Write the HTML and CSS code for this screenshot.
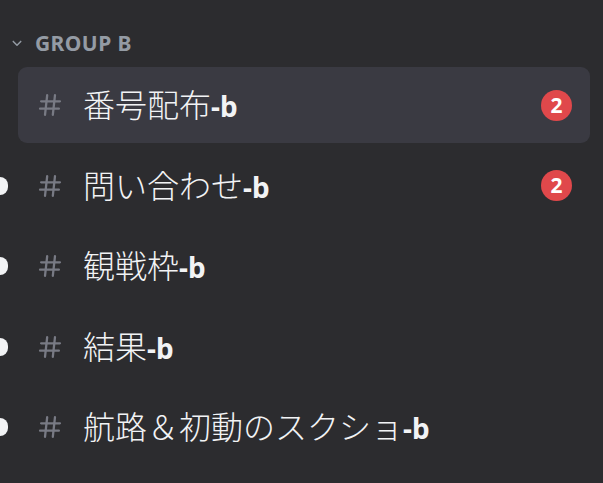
FILE: index.html
```html
<!DOCTYPE html>
<html lang="ja">
<head>
<meta charset="utf-8">
<link rel="stylesheet" href="styles.css">
</head>
<body>
<div class="sidebar">
  <div class="category">
    <svg class="chev" viewBox="0 0 12 8" width="10" height="7"><path d="M1.5 1.5 L6 6 L10.5 1.5" fill="none" stroke="#949ba4" stroke-width="1.8" stroke-linecap="round" stroke-linejoin="round"/></svg>
    <span class="cat-name">GROUP B</span>
  </div>
  <ul class="channels">
    <li class="channel selected">
      <svg class="hash" viewBox="0 0 24 24"><path d="M9.4 3 7.4 21M16.6 3 14.6 21M3.8 8.6h17.4M2.8 15.4h17.4" fill="none" stroke="currentColor" stroke-width="2.1" stroke-linecap="round"/></svg>
      <span class="name">番号配布<b>-b</b></span>
      <span class="badge">2</span>
    </li>
    <li class="channel unread">
      <span class="pill"></span>
      <svg class="hash" viewBox="0 0 24 24"><path d="M9.4 3 7.4 21M16.6 3 14.6 21M3.8 8.6h17.4M2.8 15.4h17.4" fill="none" stroke="currentColor" stroke-width="2.1" stroke-linecap="round"/></svg>
      <span class="name">問い合わせ<b>-b</b></span>
      <span class="badge">2</span>
    </li>
    <li class="channel unread">
      <span class="pill"></span>
      <svg class="hash" viewBox="0 0 24 24"><path d="M9.4 3 7.4 21M16.6 3 14.6 21M3.8 8.6h17.4M2.8 15.4h17.4" fill="none" stroke="currentColor" stroke-width="2.1" stroke-linecap="round"/></svg>
      <span class="name">観戦枠<b>-b</b></span>
    </li>
    <li class="channel unread">
      <span class="pill"></span>
      <svg class="hash" viewBox="0 0 24 24"><path d="M9.4 3 7.4 21M16.6 3 14.6 21M3.8 8.6h17.4M2.8 15.4h17.4" fill="none" stroke="currentColor" stroke-width="2.1" stroke-linecap="round"/></svg>
      <span class="name">結果<b>-b</b></span>
    </li>
    <li class="channel unread">
      <span class="pill"></span>
      <svg class="hash" viewBox="0 0 24 24"><path d="M9.4 3 7.4 21M16.6 3 14.6 21M3.8 8.6h17.4M2.8 15.4h17.4" fill="none" stroke="currentColor" stroke-width="2.1" stroke-linecap="round"/></svg>
      <span class="name">航路＆初動のスクショ<b>-b</b></span>
    </li>
  </ul>
</div>
</body>
</html>
```

FILE: styles.css
```css
html, body {
  margin: 0;
  padding: 0;
  background: #2c2c2f;
  height: 100%;
}
body {
  font-family: "Noto Sans", "Noto Sans CJK JP", sans-serif;
  color: #f2f3f5;
}
.sidebar {
  padding: 0 13px 0 18px;
}
.category {
  display: flex;
  align-items: center;
  height: 30px;
  padding-top: 28px;
  margin-left: -6px;
  margin-bottom: 9px;
}
.chev {
  display: block;
  margin-right: 13px;
}
.cat-name {
  font-size: 21px;
  font-weight: 700;
  color: #949ba4;
  letter-spacing: 0.02em;
}
.channels {
  list-style: none;
  margin: 0;
  padding: 0;
  display: flex;
  flex-direction: column;
  gap: 4.5px;
}
.channel {
  position: relative;
  display: flex;
  align-items: center;
  height: 76px;
  padding: 0 18px 0 19px;
  border-radius: 9px;
}
.channel.selected {
  background: #3a3a42;
}
.hash {
  width: 26px;
  height: 26px;
  color: #787a84;
  flex: none;
  margin-right: 20px;
}
.name {
  flex: 1;
  font-size: 32px;
  font-weight: 300;
  white-space: nowrap;
  line-height: 1;
}
.name b {
  font-family: "Noto Sans", sans-serif;
  font-size: 28px;
  font-weight: 700;
}
.badge {
  width: 31px;
  height: 31px;
  border-radius: 50%;
  background: #e0484b;
  color: #fff;
  font-size: 21px;
  font-weight: 700;
  display: flex;
  align-items: center;
  justify-content: center;
  line-height: 1;
}
.pill {
  position: absolute;
  left: -18px;
  top: 50%;
  width: 8px;
  height: 18px;
  margin-top: -9px;
  background: #f2f3f5;
  border-radius: 0 9px 9px 0;
}
```
